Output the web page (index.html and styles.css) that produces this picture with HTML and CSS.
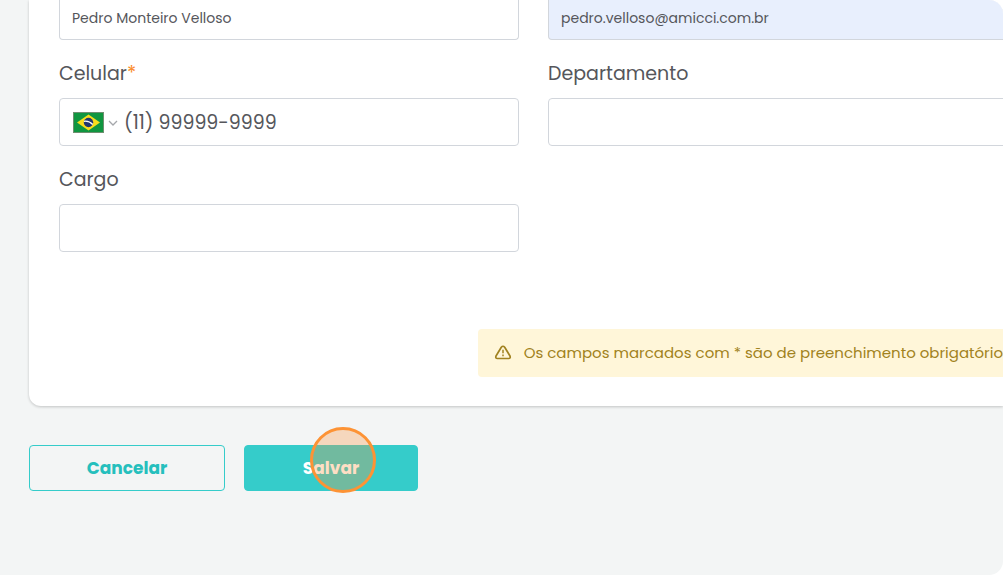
FILE: index.html
```html
<!DOCTYPE html>
<html lang="pt-BR">
<head>
<meta charset="utf-8">
<title>Cadastro</title>
<link rel="stylesheet" href="styles.css">
</head>
<body>
<main class="frame">
  <form class="form">
    <section class="card">
      <div class="fields">
        <input class="control control-cut" type="text" aria-label="Nome" value="Pedro Monteiro Velloso">
        <input class="control control-cut control-filled" type="email" aria-label="E-mail" value="pedro.velloso@amicci.com.br">
        <div class="field">
          <label class="label" for="celular">Celular<span class="required">*</span></label>
          <div class="control phone">
            <button class="country" type="button" aria-label="Brasil">
              <svg class="flag" viewBox="0 0 31 21" aria-hidden="true">
                <rect width="31" height="21" fill="#6f8f70"/>
                <rect x="1" y="1" width="29" height="19" fill="#109640"/>
                <path d="M15.500 2.500 27 10.500 15.500 18.500 4 10.500Z" fill="#f8dc1c"/>
                <circle cx="15.500" cy="10.500" r="4.700" fill="#22366f"/>
                <path d="M11 9.300Q16 8.500 19.700 12.500" fill="none" stroke="#fff" stroke-width="1.300"/>
              </svg>
              <svg class="chevron" viewBox="0 0 10 8" aria-hidden="true"><path d="M1 3 5 7 9 3" fill="none" stroke="#a5a7ab" stroke-width="1.300"/></svg>
            </button>
            <input class="phone-input" id="celular" type="tel" value="(11) 99999-9999">
          </div>
        </div>
        <div class="field">
          <label class="label" for="departamento">Departamento</label>
          <input class="control" id="departamento" type="text">
        </div>
        <div class="field">
          <label class="label" for="cargo">Cargo</label>
          <input class="control" id="cargo" type="text">
        </div>
      </div>
      <p class="notice">
        <svg class="warning" viewBox="0 0 18 18" aria-hidden="true">
          <path d="M7.300 4.300 2 13Q1.200 15.500 3.400 15.500H14.600Q16.800 15.500 16 13L10.700 4.300Q9 2.200 7.300 4.300Z" fill="none" stroke="currentColor" stroke-width="1.700" stroke-linejoin="round"/>
          <path d="M9 6.800V10.300M9 11.600V13.300" stroke="currentColor" stroke-width="1.500"/>
        </svg>
        <span>Os campos marcados com * são de preenchimento obrigatório</span>
      </p>
    </section>
    <div class="actions">
      <button class="button button-outline" type="button">Cancelar</button>
      <button class="button button-primary" type="submit">Salvar<span class="click-marker"></span></button>
    </div>
  </form>
</main>
</body>
</html>
```
FILE: styles.css
```css
* { box-sizing: border-box; }

body {
  margin: 0;
  padding: 0 3px 5px 0;
  min-height: 100vh;
  display: flex;
  background: #fff;
  color: #55565b;
  font-family: Poppins, Inter, sans-serif;
}

input, button { font: inherit; color: inherit; }

.frame {
  flex: 1;
  min-width: 0;
  overflow: hidden;
  background: #f3f5f5;
  border-radius: 0 14px 14px 0;
}

.form { padding-left: 29px; }

.card {
  padding: 0 0 29px 30px;
  background: #fff;
  border-bottom-left-radius: 12px;
  box-shadow: 0 1px 3px rgba(0, 0, 0, .2);
}

.fields {
  display: grid;
  grid-template-columns: 1fr 1fr;
  gap: 20px 29px;
  margin-right: -5px;
}

.field { min-width: 0; }

.label {
  display: block;
  margin-bottom: 10px;
  font-size: 19px;
  line-height: 28px;
}

.required { color: #fb8c2c; }

.control {
  display: block;
  width: 100%;
  height: 48px;
  padding: 0 12px;
  background: #fff;
  border: 1px solid #d2d6dc;
  border-radius: 4px;
  outline: 0;
}

.control-cut {
  height: 40px;
  padding-bottom: 2px;
  border-top: 0;
  border-radius: 0 0 4px 4px;
  font-size: 14px;
}

.control-filled { background: #e8effd; }

.phone { display: flex; align-items: center; gap: 6px; padding: 0 13px; }

.country {
  display: flex;
  align-items: center;
  gap: 4px;
  padding: 0;
  border: 0;
  background: none;
}

.flag { width: 31px; height: 21px; }
.chevron { width: 10px; height: 8px; }

.phone-input {
  flex: 1;
  min-width: 0;
  padding: 0;
  border: 0;
  outline: 0;
  background: none;
  font-size: 19px;
}

.notice {
  display: flex;
  align-items: center;
  gap: 12px;
  width: max-content;
  height: 48px;
  margin: 77px -16px 0 auto;
  padding: 0 16px 2px;
  border-radius: 4px;
  background: #fff6d9;
  color: #a18220;
  font-size: 15px;
  white-space: nowrap;
}

.warning { width: 18px; height: 18px; }

.actions { display: flex; gap: 19px; padding-top: 39px; }

.button {
  position: relative;
  height: 46px;
  border: 1px solid #35ccca;
  border-radius: 4px;
  font-size: 17px;
  font-weight: 700;
}

.button-outline { width: 196px; background: none; color: #25bfbd; }
.button-primary { width: 174px; background: #35ccca; color: #fff; }

.click-marker {
  position: absolute;
  top: -19px;
  left: 65px;
  width: 66px;
  height: 66px;
  border: 3px solid #fd9335;
  border-radius: 50%;
  background: rgba(251, 146, 60, .3);
}
```
